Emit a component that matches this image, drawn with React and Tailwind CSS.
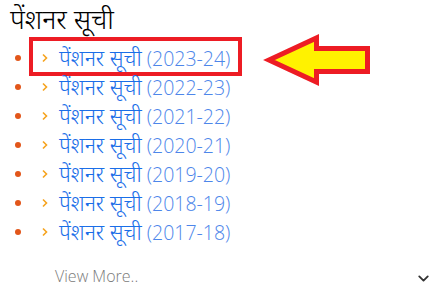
import { ChevronDown } from 'lucide-react';

const YEARS = ['2023-24', '2022-23', '2021-22', '2020-21', '2019-20', '2018-19', '2017-18'];

function Caret() {
  return (
    <svg width="6" height="10" viewBox="0 0 6 10" className="shrink-0">
      <path d="M1 1.5 L4.5 5 L1 8.5" fill="none" stroke="#f6a31e" strokeWidth="1.6" />
    </svg>
  );
}

function Arrow() {
  return (
    <svg
      width="115"
      height="60"
      viewBox="0 0 115 60"
      className="absolute left-[260px] top-[-13px] pointer-events-none"
    >
      <polygon
        points="9,30 56.5,8 56.5,18.5 107.5,18.5 107.5,41.5 56.5,41.5 56.5,52"
        fill="#fff200"
        stroke="#ed1c24"
        strokeWidth="5"
        strokeLinejoin="miter"
      />
    </svg>
  );
}

export default function App() {
  return (
    <div className="w-[440px] h-[288px] bg-white font-['Open_Sans',sans-serif] overflow-hidden">
      <h2 className="pl-[10px] pt-[1px] h-[43px] text-[27px] leading-[36px] text-black font-light font-['Noto_Sans','Open_Sans',sans-serif]">
        पेंशनर सूची
      </h2>

      <ul>
        {YEARS.map((y, i) => (
          <li key={y} className="relative flex items-center h-[29px]">
            <span className="ml-[15px] w-[6px] h-[6px] rounded-full bg-[#e2561a] shrink-0" />
            <span className="ml-[21px] flex items-center">
              <Caret />
            </span>
            <a href="#" className="ml-[11px] flex items-baseline gap-[5px] leading-none">
              <span className="text-[21.5px] font-light text-[#1a6ee8] font-['Noto_Sans','Open_Sans',sans-serif]">पेंशनर सूची</span>
              <span className="text-[19.5px] font-light text-[#4d86ea]">({y})</span>
            </a>
            {i === 0 && (
              <>
                <span className="absolute left-[29px] top-[-6px] w-[213px] h-[39px] border-4 border-[#ed1c24] pointer-events-none" />
                <Arrow />
              </>
            )}
          </li>
        ))}
      </ul>

      <div className="flex items-center justify-between mt-[18px] pl-[55px] pr-[8px]">
        <span className="text-[16px] font-light text-[#7a7a7a]">View More..</span>
        <ChevronDown size={17} strokeWidth={2.6} className="text-[#333] mt-[5px]" />
      </div>
    </div>
  );
}
